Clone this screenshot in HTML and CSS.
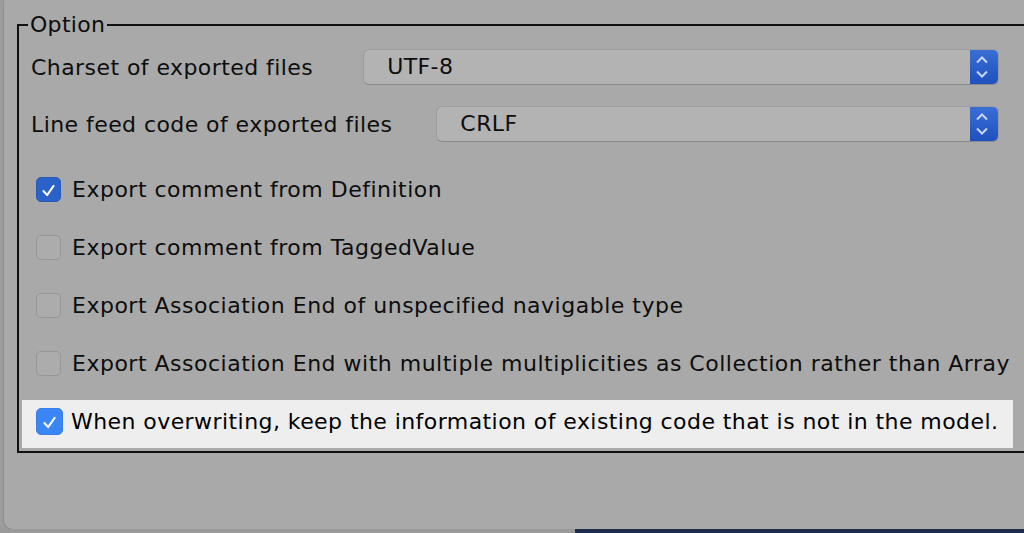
FILE: index.html
```html
<!DOCTYPE html>
<html lang="en">
<head>
<meta charset="utf-8">
<title>Option</title>
<link rel="stylesheet" href="styles.css">
</head>
<body>
<div class="screen">
  <div class="window">
    <fieldset class="group">
      <legend class="legend">Option</legend>
      <div class="select-row row-charset">
        <span class="label">Charset of exported files</span>
        <div class="select">
          <span class="select-value">UTF-8</span>
          <span class="select-btn">
            <svg width="29" height="36" viewBox="0 0 29 36"><path d="M7 13.5 L12 8.5 L17 13.5" fill="none" stroke="#c9d6f0" stroke-width="2"/><path d="M7 22.5 L12 27.5 L17 22.5" fill="none" stroke="#c9d6f0" stroke-width="2"/></svg>
          </span>
        </div>
      </div>
      <div class="select-row row-linefeed">
        <span class="label">Line feed code of exported files</span>
        <div class="select">
          <span class="select-value">CRLF</span>
          <span class="select-btn">
            <svg width="29" height="36" viewBox="0 0 29 36"><path d="M7 13.5 L12 8.5 L17 13.5" fill="none" stroke="#c9d6f0" stroke-width="2"/><path d="M7 22.5 L12 27.5 L17 22.5" fill="none" stroke="#c9d6f0" stroke-width="2"/></svg>
          </span>
        </div>
      </div>
      <div class="checks">
        <div class="check-row">
          <span class="box checked"><svg width="25" height="25" viewBox="0 0 25 25"><path d="M7 13 L11 17.5 L18 7.5" fill="none" stroke="#fff" stroke-width="2.2" stroke-linecap="round" stroke-linejoin="round"/></svg></span>
          <span class="check-label">Export comment from Definition</span>
        </div>
        <div class="check-row">
          <span class="box"></span>
          <span class="check-label">Export comment from TaggedValue</span>
        </div>
        <div class="check-row">
          <span class="box"></span>
          <span class="check-label">Export Association End of unspecified navigable type</span>
        </div>
        <div class="check-row">
          <span class="box"></span>
          <span class="check-label">Export Association End with multiple multiplicities as Collection rather than Array</span>
        </div>
        <div class="check-row focus">
          <span class="box checked bright"><svg width="27" height="27" viewBox="0 0 27 27"><path d="M8 14 L12 18.5 L19 8.5" fill="none" stroke="#fff" stroke-width="2.2" stroke-linecap="round" stroke-linejoin="round"/></svg></span>
          <span class="check-label">When overwriting, keep the information of existing code that is not in the model.</span>
        </div>
      </div>
    </fieldset>
  </div>
  <div class="under">
    <div class="under-left"></div>
    <div class="under-right"></div>
  </div>
</div>
</body>
</html>
```
FILE: styles.css
```css
html, body {
  margin: 0;
  padding: 0;
}
body {
  width: 1024px;
  height: 533px;
  overflow: hidden;
  background: #9d9d9d;
  font-family: "DejaVu Sans", "Liberation Sans", sans-serif;
  color: #0d0d0d;
}
.screen {
  width: 1024px;
  height: 533px;
  overflow: hidden;
  display: flex;
  flex-direction: column;
}
.window {
  margin-left: 4px;
  width: 1060px;
  height: 529px;
  flex: none;
  background: #a9a9a9;
  border-bottom-left-radius: 9px;
  box-shadow: -1px 1px 0 #8f8f8f;
  overflow: hidden;
}
.under {
  display: flex;
  height: 4px;
}
.under-left {
  width: 575px;
  background: #9a9a9a;
}
.under-right {
  flex: 1;
  background: #1e2c4b;
}
.group {
  margin: 11px 0 0 13px;
  width: 991px;
  padding: 0 30px 3px 3px;
  border: 2px solid #111;
  box-sizing: content-box;
  display: flex;
  flex-direction: column;
}
.legend {
  margin-left: 6px;
  padding: 0 2px;
  font-size: 22px;
  line-height: 28px;
  letter-spacing: 0.3px;
}
.label {
  font-size: 22px;
  letter-spacing: 0.43px;
  padding-left: 9px;
  white-space: nowrap;
}
.select-row {
  display: flex;
  align-items: center;
  height: 36px;
  padding-right: 14px;
}
.row-charset {
  margin-top: 10px;
}
.row-charset .select {
  margin-left: 50px;
}
.row-linefeed {
  margin-top: 21px;
}
.row-linefeed .select {
  margin-left: 44px;
}
.select {
  flex: 1;
  height: 36px;
  box-sizing: border-box;
  display: flex;
  align-items: stretch;
  background: #b3b3b3;
  border: 1px solid #9c9c9c;
  border-bottom-color: #8a8a8a;
  border-radius: 6px;
  overflow: hidden;
}
.select-value {
  flex: 1;
  font-size: 22px;
  letter-spacing: 0.43px;
  line-height: 34px;
  padding-left: 23px;
}
.select-btn {
  width: 29px;
  margin: -1px -1px -1px 0;
  background: linear-gradient(#3a6fd5, #1f50bf);
  display: flex;
  align-items: center;
  justify-content: center;
}
.select-btn svg {
  display: block;
}
.checks {
  margin-top: 23px;
  display: flex;
  flex-direction: column;
  gap: 10px;
}
.check-row {
  display: flex;
  align-items: center;
  height: 48px;
  padding-left: 14px;
  gap: 11px;
  box-sizing: border-box;
}
.check-label {
  font-size: 22px;
  letter-spacing: 0.5px;
  white-space: nowrap;
}
.focus {
  background: #eeeeee;
  margin-top: 3px;
  padding-bottom: 5px;
}
.focus .check-label {
  color: #000;
  letter-spacing: 0.43px;
}
.box {
  width: 25px;
  height: 25px;
  box-sizing: border-box;
  border-radius: 5px;
  border: 1px solid #959595;
  background: #acacac;
  flex: none;
  display: flex;
}
.box.checked {
  background: #2b62c8;
  border-color: #2a5ab8;
}
.box.bright {
  width: 27px;
  height: 27px;
  background: #3a86f5;
  border-color: #3a7ee8;
  margin-left: 0;
  margin-right: -3px;
}
.box svg {
  display: block;
  margin: auto;
}
```
